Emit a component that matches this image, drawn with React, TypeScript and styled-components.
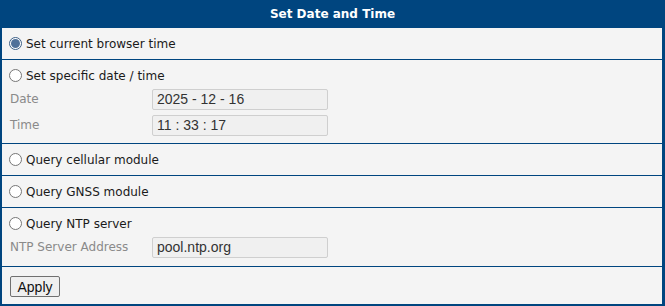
import React from 'react';
import styled, { createGlobalStyle } from 'styled-components';

const GlobalStyle = createGlobalStyle`
  html, body {
    margin: 0;
    padding: 0;
    background: #ffffff;
  }
  * {
    box-sizing: border-box;
  }
`;

const Panel = styled.form`
  width: 665px;
  height: 306px;
  border: 2px solid #00457f;
  border-right-width: 3px;
  border-top: none;
  background: #f4f4f4;
  font-family: "DejaVu Sans", Verdana, sans-serif;
  font-size: 12px;
  color: #1a1a1a;
  display: flex;
  flex-direction: column;
`;

const Header = styled.div`
  height: 28px;
  margin: 0 -3px 0 -2px;
  background: #00457f;
  color: #ffffff;
  font-weight: bold;
  font-size: 12px;
  display: flex;
  align-items: center;
  justify-content: center;
  padding-bottom: 1px;
`;

const Section = styled.div<{ $h: number }>`
  height: ${p => p.$h}px;
  padding: 6px 8px 0 7px;
  border-bottom: 1px solid #00457f;
  display: flex;
  flex-direction: column;
  gap: 4px;
`;

const Fields = styled.div`
  display: flex;
  flex-direction: column;
  gap: 6px;
`;

const Footer = styled.div`
  flex: 1;
  padding: 9px 8px 0 8px;
`;

const RadioLabel = styled.label`
  display: flex;
  align-items: center;
  gap: 4px;
  height: 19px;
  cursor: pointer;
`;

const Radio = styled.span<{ $checked?: boolean }>`
  width: 13px;
  height: 13px;
  border-radius: 50%;
  border: 1px solid ${p => (p.$checked ? '#3c5f86' : '#767676')};
  background: #ffffff;
  display: inline-flex;
  align-items: center;
  justify-content: center;
  flex: none;
  &::after {
    content: '';
    display: ${p => (p.$checked ? 'block' : 'none')};
    width: 9px;
    height: 9px;
    border-radius: 50%;
    background: #4f7099;
  }
`;

const FieldRow = styled.div`
  display: flex;
  align-items: center;
  height: 20px;
`;

const FieldLabel = styled.span`
  width: 143px;
  padding-left: 1px;
  color: #8a8a8a;
`;

const Input = styled.input`
  width: 176px;
  height: 21px;
  border: 1px solid #cfcfcf;
  border-radius: 2px;
  background: #f0f0f0;
  color: #333333;
  font-family: "Liberation Sans", Arial, sans-serif;
  font-size: 14px;
  padding: 0 4px;
  outline: none;
`;

const Button = styled.button`
  width: 50px;
  height: 21px;
  border: 1px solid #707070;
  border-radius: 2px;
  background: #efefef;
  color: #111111;
  font-family: "Liberation Sans", Arial, sans-serif;
  font-size: 14px;
  padding: 0;
`;

type Field = { label: string; value: string };

type Option = {
  label: string;
  checked?: boolean;
  height: number;
  fields?: Field[];
};

const options: Option[] = [
  { label: 'Set current browser time', checked: true, height: 32 },
  {
    label: 'Set specific date / time',
    height: 84,
    fields: [
      { label: 'Date', value: '2025 - 12 - 16' },
      { label: 'Time', value: '11 : 33 : 17' },
    ],
  },
  { label: 'Query cellular module', height: 32 },
  { label: 'Query GNSS module', height: 32 },
  {
    label: 'Query NTP server',
    height: 59,
    fields: [{ label: 'NTP Server Address', value: 'pool.ntp.org' }],
  },
];

export default function App() {
  return (
    <>
      <GlobalStyle />
      <Panel onSubmit={e => e.preventDefault()}>
        <Header>Set Date and Time</Header>
        {options.map(opt => (
          <Section key={opt.label} $h={opt.height}>
            <RadioLabel>
              <Radio $checked={opt.checked} />
              {opt.label}
            </RadioLabel>
            {opt.fields && (
              <Fields>
                {opt.fields.map(f => (
                  <FieldRow key={f.label}>
                    <FieldLabel>{f.label}</FieldLabel>
                    <Input defaultValue={f.value} readOnly />
                  </FieldRow>
                ))}
              </Fields>
            )}
          </Section>
        ))}
        <Footer>
          <Button type="submit">Apply</Button>
        </Footer>
      </Panel>
    </>
  );
}
